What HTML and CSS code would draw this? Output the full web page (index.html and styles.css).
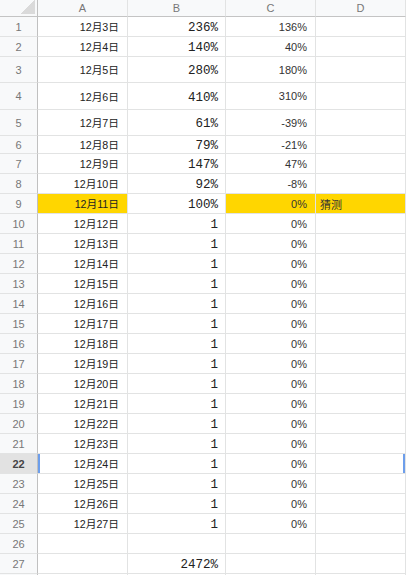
FILE: index.html
```html
<!DOCTYPE html>
<html>
<head>
<meta http-equiv="Content-Type" content="text/html; charset=utf-8"/>
<title>Sheet</title>
<link rel="stylesheet" href="styles.css">
</head>
<body>
<div class="sheet">
  <div class="row head">
    <div class="rh corner"><span class="tri"></span></div>
    <div class="ch">A</div><div class="ch">B</div><div class="ch">C</div><div class="ch">D</div>
  </div>

  <div class="row"><div class="rh">1</div><div class="c date">12月3日</div><div class="c mono">236%</div><div class="c pct">136%</div><div class="c"></div></div>
  <div class="row"><div class="rh">2</div><div class="c date">12月4日</div><div class="c mono">140%</div><div class="c pct">40%</div><div class="c"></div></div>
  <div class="row r26"><div class="rh">3</div><div class="c date">12月5日</div><div class="c mono">280%</div><div class="c pct">180%</div><div class="c"></div></div>
  <div class="row r27"><div class="rh">4</div><div class="c date">12月6日</div><div class="c mono">410%</div><div class="c pct">310%</div><div class="c"></div></div>
  <div class="row r26"><div class="rh">5</div><div class="c date">12月7日</div><div class="c mono">61%</div><div class="c pct">-39%</div><div class="c"></div></div>
  <div class="row r18"><div class="rh">6</div><div class="c date">12月8日</div><div class="c mono">79%</div><div class="c pct">-21%</div><div class="c"></div></div>
  <div class="row"><div class="rh">7</div><div class="c date">12月9日</div><div class="c mono">147%</div><div class="c pct">47%</div><div class="c"></div></div>
  <div class="row"><div class="rh">8</div><div class="c date">12月10日</div><div class="c mono">92%</div><div class="c pct">-8%</div><div class="c"></div></div>
  <div class="row"><div class="rh">9</div><div class="c date hl">12月11日</div><div class="c mono">100%</div><div class="c pct hl">0%</div><div class="c note hl">猜测</div></div>
  <div class="row"><div class="rh">10</div><div class="c date">12月12日</div><div class="c mono">1</div><div class="c pct">0%</div><div class="c"></div></div>
  <div class="row"><div class="rh">11</div><div class="c date">12月13日</div><div class="c mono">1</div><div class="c pct">0%</div><div class="c"></div></div>
  <div class="row"><div class="rh">12</div><div class="c date">12月14日</div><div class="c mono">1</div><div class="c pct">0%</div><div class="c"></div></div>
  <div class="row"><div class="rh">13</div><div class="c date">12月15日</div><div class="c mono">1</div><div class="c pct">0%</div><div class="c"></div></div>
  <div class="row"><div class="rh">14</div><div class="c date">12月16日</div><div class="c mono">1</div><div class="c pct">0%</div><div class="c"></div></div>
  <div class="row"><div class="rh">15</div><div class="c date">12月17日</div><div class="c mono">1</div><div class="c pct">0%</div><div class="c"></div></div>
  <div class="row"><div class="rh">16</div><div class="c date">12月18日</div><div class="c mono">1</div><div class="c pct">0%</div><div class="c"></div></div>
  <div class="row"><div class="rh">17</div><div class="c date">12月19日</div><div class="c mono">1</div><div class="c pct">0%</div><div class="c"></div></div>
  <div class="row"><div class="rh">18</div><div class="c date">12月20日</div><div class="c mono">1</div><div class="c pct">0%</div><div class="c"></div></div>
  <div class="row"><div class="rh">19</div><div class="c date">12月21日</div><div class="c mono">1</div><div class="c pct">0%</div><div class="c"></div></div>
  <div class="row"><div class="rh">20</div><div class="c date">12月22日</div><div class="c mono">1</div><div class="c pct">0%</div><div class="c"></div></div>
  <div class="row"><div class="rh">21</div><div class="c date">12月23日</div><div class="c mono">1</div><div class="c pct">0%</div><div class="c"></div></div>
  <div class="row sel"><div class="rh">22</div><div class="c date">12月24日</div><div class="c mono">1</div><div class="c pct">0%</div><div class="c"></div></div>
  <div class="row"><div class="rh">23</div><div class="c date">12月25日</div><div class="c mono">1</div><div class="c pct">0%</div><div class="c"></div></div>
  <div class="row"><div class="rh">24</div><div class="c date">12月26日</div><div class="c mono">1</div><div class="c pct">0%</div><div class="c"></div></div>
  <div class="row"><div class="rh">25</div><div class="c date">12月27日</div><div class="c mono">1</div><div class="c pct">0%</div><div class="c"></div></div>
  <div class="row"><div class="rh">26</div><div class="c"></div><div class="c"></div><div class="c"></div><div class="c"></div></div>
  <div class="row"><div class="rh">27</div><div class="c"></div><div class="c mono">2472%</div><div class="c"></div><div class="c"></div></div>
  <div class="row"><div class="rh"></div><div class="c"></div><div class="c"></div><div class="c"></div><div class="c"></div></div>
</div>
</body>
</html>
```

FILE: styles.css
```css
body {
  margin: 0;
  background-color: white;
  font-family: "Liberation Sans", "Noto Sans CJK SC", sans-serif;
  font-size: 11px;
  overflow: hidden;
}

.sheet {
  width: 406px;
}

.row {
  display: grid;
  grid-template-columns: 38px 90px 98px 90px 1fr;
  height: 20px;
}

.row.head { height: 17px; }
.row.r18 { height: 18px; }
.row.r26 { height: 26px; }
.row.r27 { height: 27px; }

.row > div {
  box-sizing: border-box;
  border-right: 1px solid #e2e3e3;
  border-bottom: 1px solid #e2e3e3;
  display: flex;
  align-items: center;
  overflow: hidden;
  white-space: nowrap;
}

.rh {
  background-color: #f8f9fa;
  color: #777;
  justify-content: center;
  border-right-color: #c0c0c0 !important;
}

.head > div {
  background-color: #f8f9fa;
  border-bottom-color: #c4c4c4;
}

.ch {
  justify-content: center;
  color: #777;
}

.corner {
  position: relative;
}

.tri {
  position: absolute;
  right: 2px;
  bottom: 2px;
  width: 15px;
  height: 14px;
  background: linear-gradient(to bottom right, transparent 50%, #dadada 50%);
}

.c {
  color: #222;
}

.date {
  justify-content: flex-end;
  padding-right: 8px;
  font-size: 10.7px;
}

.mono {
  justify-content: flex-end;
  padding-right: 7px;
  padding-top: 3px;
  font-family: "Liberation Mono", monospace;
  font-size: 12.5px;
  color: #222;
}

.pct {
  justify-content: flex-end;
  padding-right: 8px;
  color: #333;
}

.note {
  padding-left: 4px;
  color: #333;
}

.hl {
  background-color: #ffd600;
}

.sel .rh {
  background-color: #e2e2e2;
  color: #444;
  font-weight: bold;
}

.sel .date {
  box-shadow: inset 2px 0 #6d9eeb;
}

.sel > div:last-child {
  box-shadow: inset -2px 0 #6d9eeb;
}
```
